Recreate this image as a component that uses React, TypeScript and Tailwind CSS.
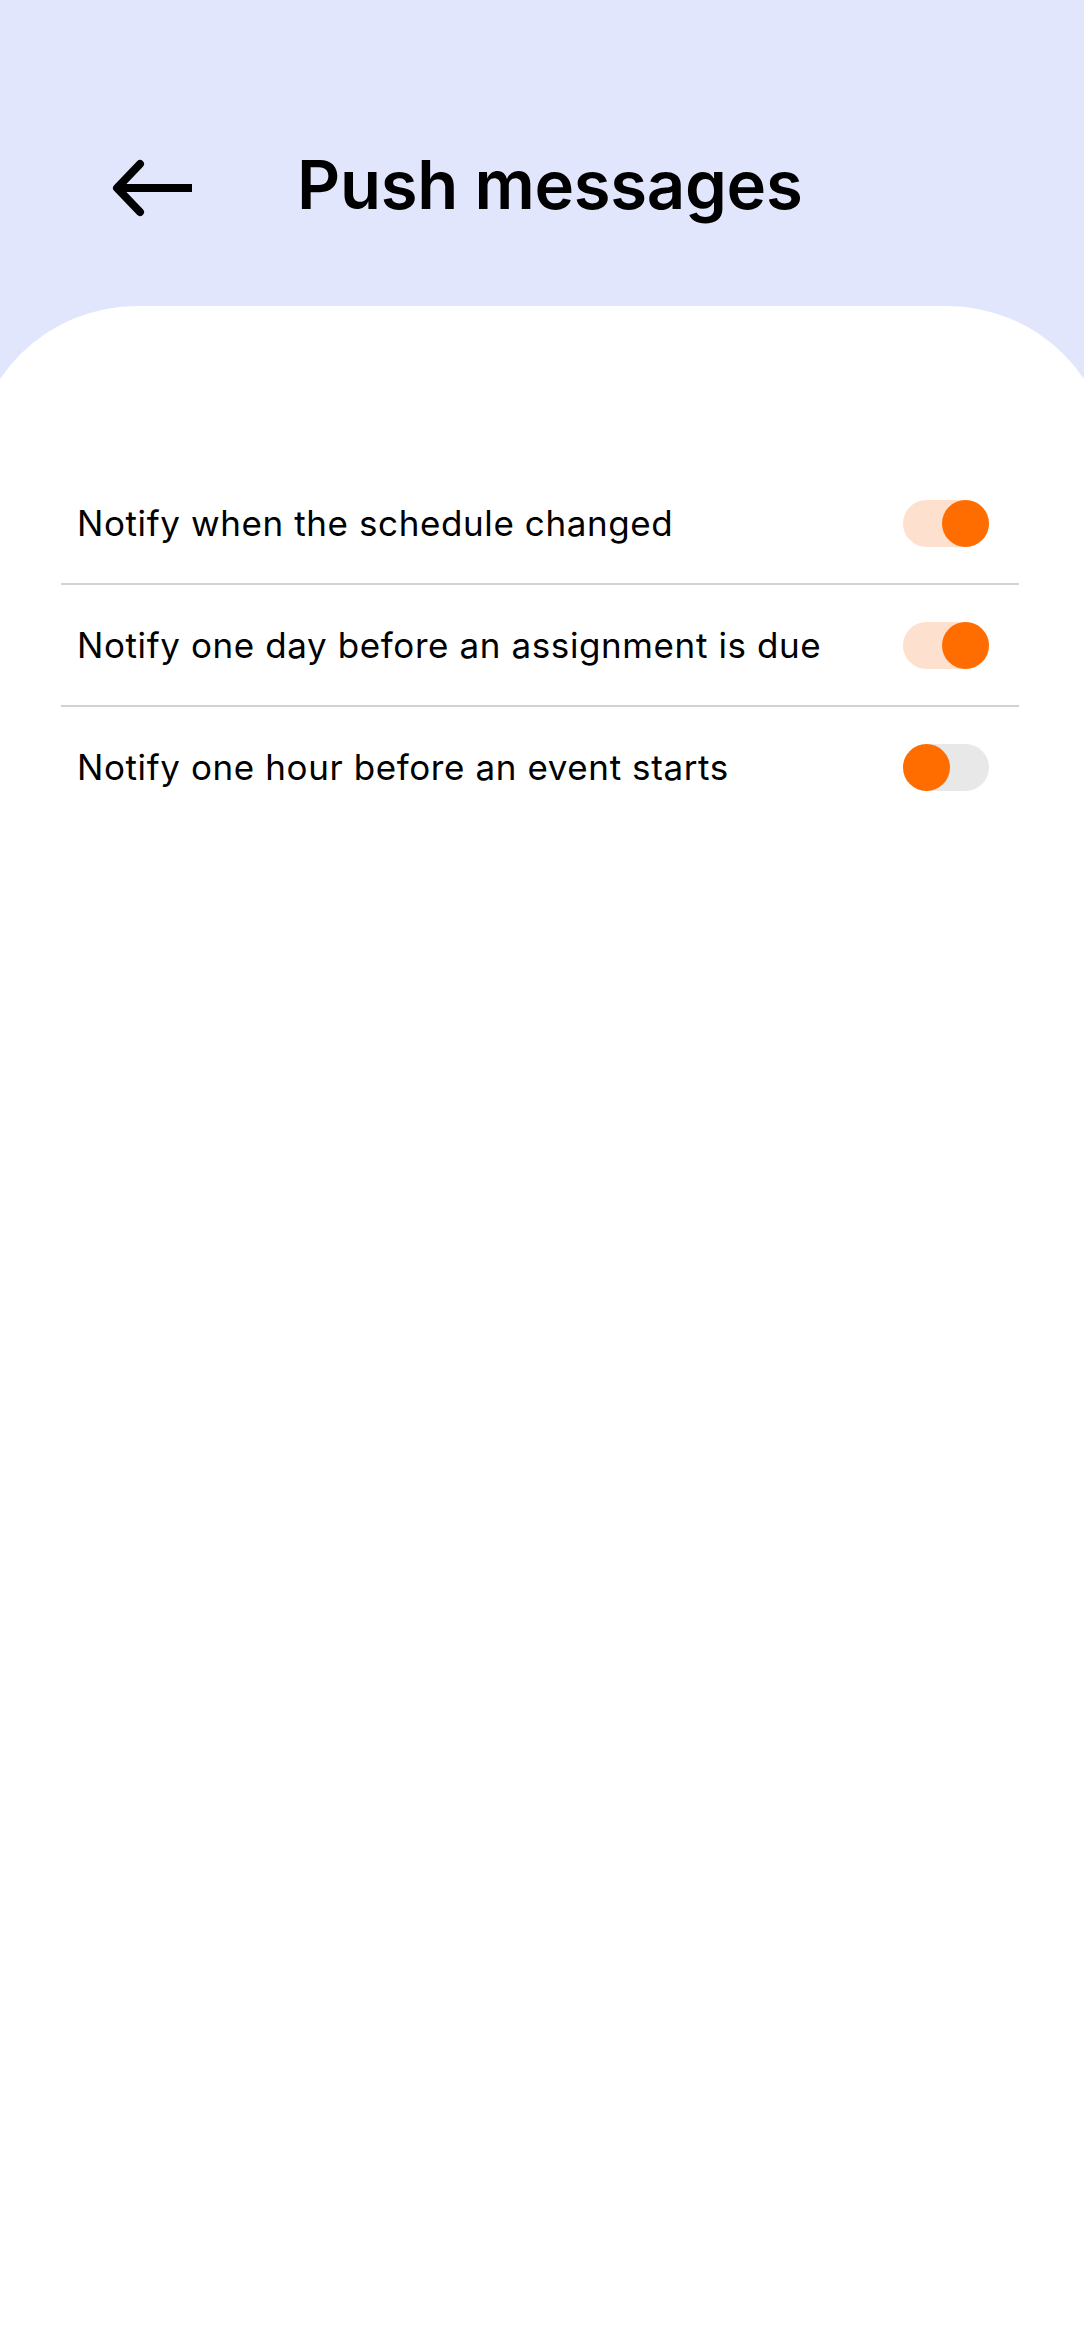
import { useState } from "react";

const settings = [
    { label: "Notify when the schedule changed", on: true },
    { label: "Notify one day before an assignment is due", on: true },
    { label: "Notify one hour before an event starts", on: false },
];

function Toggle({ on, onClick }: { on: boolean; onClick: () => void }) {
    return (
        <button
            onClick={onClick}
            className={`relative w-[86px] h-[47px] rounded-full shrink-0 flex items-center ${on ? "bg-[#fde0ce] justify-end" : "bg-[#e8e8e8] justify-start"}`}
        >
            <span className="w-[47px] h-[47px] rounded-full bg-[#ff6d00]" />
        </button>
    );
}

export default function App() {
    const [values, setValues] = useState(settings.map((s) => s.on));

    return (
        <div
            className="min-h-screen flex flex-col bg-[#e2e6fc] overflow-hidden text-black"
            style={{ fontFamily: "Inter, 'Noto Sans', sans-serif" }}
        >
            {/* Header */}
            <header className="h-[306px] pt-[150px] pl-[111px]">
                <div className="h-[76px] flex items-center">
                    <svg width="82" height="62" viewBox="0 0 82 62" fill="none" stroke="currentColor" strokeWidth="8">
                        <path d="M29 7 L6 31 L29 55" strokeLinecap="round" strokeLinejoin="round" />
                        <path d="M8 31 H81" strokeLinecap="butt" />
                    </svg>
                    <h1 className="ml-[104px] text-[67px] leading-none font-semibold tracking-[-0.3px] -mt-[8px]">
                        Push messages
                    </h1>
                </div>
            </header>

            {/* Settings card */}
            <main className="flex-1 bg-white rounded-t-[165px] -mx-[28px] pt-[157px] pl-[89px] pr-[93px]">
                {settings.map((s, i) => (
                    <div key={s.label}>
                        {i > 0 && <div className="h-[2px] bg-[#d2d2d2]" />}
                        <div className="h-[120px] flex items-center justify-between pl-[16px] pr-[30px]">
                            <span className="text-[35px] leading-none tracking-[0.6px]">{s.label}</span>
                            <Toggle
                                on={values[i]}
                                onClick={() => setValues(values.map((v, j) => (j === i ? !v : v)))}
                            />
                        </div>
                    </div>
                ))}
            </main>
        </div>
    );
}
